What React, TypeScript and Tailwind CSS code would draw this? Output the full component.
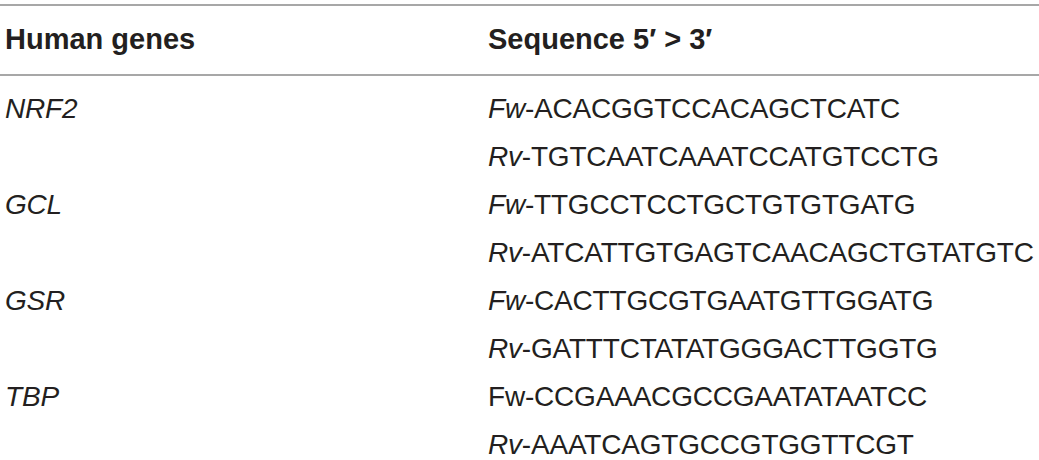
const rows = [
  { gene: 'NRF2', seqs: [{ p: 'Fw', s: 'ACACGGTCCACAGCTCATC', i: true }, { p: 'Rv', s: 'TGTCAATCAAATCCATGTCCTG', i: true }] },
  { gene: 'GCL', seqs: [{ p: 'Fw', s: 'TTGCCTCCTGCTGTGTGATG', i: true }, { p: 'Rv', s: 'ATCATTGTGAGTCAACAGCTGTATGTC', i: true }] },
  { gene: 'GSR', seqs: [{ p: 'Fw', s: 'CACTTGCGTGAATGTTGGATG', i: true }, { p: 'Rv', s: 'GATTTCTATATGGGACTTGGTG', i: true }] },
  { gene: 'TBP', seqs: [{ p: 'Fw', s: 'CCGAAACGCCGAATATAATCC', i: false }, { p: 'Rv', s: 'AAATCAGTGCCGTGGTTCGT', i: true }] },
];

export default function App() {
  return (
    <div className="w-[1039px] h-[460px] bg-white text-[#231f20] pt-1 overflow-hidden" style={{ fontFamily: '"Liberation Sans", Arial, sans-serif' }}>
      <div className="border-t-2 border-[#a7a7a7]">
        <div className="grid grid-cols-[483px_1fr] h-[70px] items-center pl-[5px] text-[29px] font-bold border-b-2 border-[#a7a7a7]">
          <div>Human genes</div>
          <div>Sequence 5′ &gt; 3′</div>
        </div>
        <div className="pt-[9px]">
          {rows.map((r) => (
            <div key={r.gene} className="grid grid-cols-[483px_1fr] pl-[5px] text-[28px] tracking-[-0.2px]">
              <div className="italic h-[48px] leading-[48px]">{r.gene}</div>
              <div>
                {r.seqs.map((q) => (
                  <div key={q.p} className="h-[48px] leading-[48px] whitespace-nowrap">
                    <span className={q.i ? 'italic' : ''}>{q.p}</span>-{q.s}
                  </div>
                ))}
              </div>
            </div>
          ))}
        </div>
      </div>
    </div>
  );
}
